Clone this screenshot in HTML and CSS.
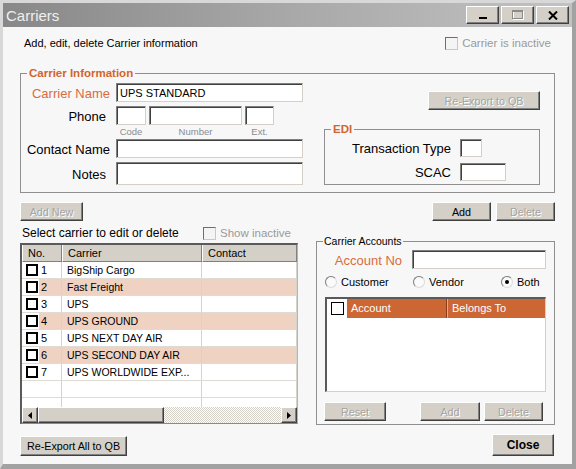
FILE: index.html
```html
<!DOCTYPE html>
<html lang="en">
<head>
  <meta charset="UTF-8" />
  <title>Carriers</title>
  <link rel="stylesheet" href="styles.css">
</head>
<body>

<div class="window">
  <div class="titlebar">
    <span class="title">Carriers</span>
    <div class="caption-btns">
      <span class="cap-btn cap-min"><svg width="8" height="2" viewBox="0 0 8 2"><rect width="8" height="2" fill="#000"/></svg></span>
      <span class="cap-btn cap-max"><svg width="12" height="10" viewBox="0 0 12 10"><rect x="1.5" y="1.5" width="10" height="8" fill="none" stroke="#fff"/><rect x="0.5" y="0.5" width="10" height="8" fill="none" stroke="#8a8a8a"/><line x1="0" y1="1.5" x2="11" y2="1.5" stroke="#8a8a8a"/></svg></span>
      <span class="cap-btn cap-close"><svg width="10" height="9" viewBox="0 0 10 9"><path d="M1 0.5 L9 8.5 M9 0.5 L1 8.5" stroke="#000" stroke-width="2"/></svg></span>
    </div>
  </div>

  <div class="content">
    <div class="intro">
      <span>Add, edit, delete Carrier information</span>
      <span class="check muted"><span class="box"></span>Carrier is inactive</span>
    </div>

    <fieldset class="group carrier-info">
      <legend>Carrier Information</legend>
      <div class="ci-body">
        <div class="ci-form">
          <div class="ci-row">
            <label class="lbl req">Carrier Name</label>
            <input class="field name" type="text" value="UPS STANDARD">
          </div>
          <div class="ci-row">
            <label class="lbl short">Phone</label>
            <div class="phone">
              <input class="field ph-code" type="text">
              <input class="field ph-num" type="text">
              <input class="field ph-ext" type="text">
            </div>
          </div>
          <div class="hints">
            <span class="ph-code">Code</span>
            <span class="ph-num">Number</span>
            <span class="ph-ext">Ext.</span>
          </div>
          <div class="ci-row contact">
            <label class="lbl">Contact Name</label>
            <input class="field name" type="text">
          </div>
          <div class="ci-row">
            <label class="lbl short">Notes</label>
            <input class="field name notes" type="text">
          </div>
        </div>

        <div class="ci-side">
          <button class="btn off reexport">Re-Export to QB</button>
          <fieldset class="group edi">
            <legend>EDI</legend>
            <div class="edi-grid">
              <label class="lbl">Transaction Type</label>
              <input class="field tx" type="text">
              <label class="lbl">SCAC</label>
              <input class="field scac" type="text">
            </div>
          </fieldset>
        </div>
      </div>
    </fieldset>

    <div class="lower">
      <div class="list-col">
        <button class="btn off add-new">Add New</button>
        <div class="select-row">
          <span>Select carrier to edit or delete</span>
          <span class="check muted"><span class="box"></span>Show inactive</span>
        </div>

        <div class="carrier-grid">
          <div class="gh">
            <span>No.</span>
            <span>Carrier</span>
            <span>Contact</span>
          </div>
          <div class="gbody">
            <div class="gr"><span class="no"><span class="cb-cell"><span class="cb"></span></span>1</span><span>BigShip Cargo</span><span></span></div>
            <div class="gr alt"><span class="no"><span class="cb-cell"><span class="cb"></span></span>2</span><span>Fast Freight</span><span></span></div>
            <div class="gr"><span class="no"><span class="cb-cell"><span class="cb"></span></span>3</span><span>UPS</span><span></span></div>
            <div class="gr alt"><span class="no"><span class="cb-cell"><span class="cb"></span></span>4</span><span>UPS GROUND</span><span></span></div>
            <div class="gr"><span class="no"><span class="cb-cell"><span class="cb"></span></span>5</span><span>UPS NEXT DAY AIR</span><span></span></div>
            <div class="gr alt"><span class="no"><span class="cb-cell"><span class="cb"></span></span>6</span><span>UPS SECOND DAY AIR</span><span></span></div>
            <div class="gr"><span class="no"><span class="cb-cell"><span class="cb"></span></span>7</span><span>UPS WORLDWIDE EXP...</span><span></span></div>
            <div class="gr"><span></span><span></span><span></span></div>
            <div class="gr"><span></span><span></span><span></span></div>
          </div>
          <div class="hscroll">
            <span class="sb-btn"><svg width="4" height="7" viewBox="0 0 4 7"><path d="M4 0 L0 3.5 L4 7Z" fill="#000"/></svg></span>
            <span class="sb-btn thumb"></span>
            <span class="track"></span>
            <span class="sb-btn"><svg width="4" height="7" viewBox="0 0 4 7"><path d="M0 0 L4 3.5 L0 7Z" fill="#000"/></svg></span>
          </div>
        </div>

        <button class="btn reexport-all">Re-Export All to QB</button>
      </div>

      <div class="acc-col">
        <div class="acc-btns">
          <button class="btn">Add</button>
          <button class="btn off">Delete</button>
        </div>

        <fieldset class="group accounts">
          <legend>Carrier Accounts</legend>
          <div class="acc-row">
            <label class="lbl req">Account No</label>
            <input class="field acc-no" type="text">
          </div>
          <div class="radios">
            <span class="radio"><span class="dot"></span>Customer</span>
            <span class="radio"><span class="dot"></span>Vendor</span>
            <span class="radio"><span class="dot on"></span>Both</span>
          </div>
          <div class="acc-grid">
            <div class="ah">
              <span class="ah-cb"><span class="cb thin"></span></span>
              <span class="ah-acc">Account</span>
              <span class="ah-bel">Belongs To</span>
            </div>
          </div>
          <div class="acc-actions">
            <button class="btn off reset">Reset</button>
            <button class="btn off acc-add">Add</button>
            <button class="btn off acc-del">Delete</button>
          </div>
        </fieldset>

        <button class="btn close">Close</button>
      </div>
    </div>
  </div>
</div>

</body>
</html>
```

FILE: styles.css
```css
body {
  margin: 0;
  font-family: "Liberation Sans", Arial, sans-serif;
  font-size: 12px;
  color: #000;
  background: #fff;
}
.window {
  width: 576px;
  height: 469px;
  box-sizing: border-box;
  border-style: solid;
  border-width: 3px 4px 5px 3px;
  border-color: #d8d8d8 #a2a2a2 #a2a2a2 #d8d8d8;
  background: #f7f7f7;
  display: flex;
  flex-direction: column;
}

/* title bar */
.titlebar {
  height: 24px;
  flex: none;
  display: flex;
  align-items: center;
  padding: 0 3px;
  background: linear-gradient(90deg, #888 0%, #a8a8a8 50%, #c2c2c2 100%);
}
.title {
  flex: 1;
  font-size: 15px;
  color: #efefef;
}
.caption-btns {
  display: flex;
  gap: 2px;
}
.cap-btn {
  width: 33px;
  height: 18px;
  box-sizing: border-box;
  background: #d4d0c8;
  border: 1px solid;
  border-color: #fff #404040 #404040 #fff;
  box-shadow: inset -1px -1px 0 #808080;
  display: flex;
  align-items: center;
  justify-content: center;
}
.cap-min { align-items: flex-end; padding-bottom: 4px; }

.content {
  flex: 1;
  padding: 6px 17px 0;
}

/* common controls */
.btn {
  font: inherit;
  font-size: 10.75px;
  padding: 0;
  height: 19px;
  box-sizing: border-box;
  background: #d4d0c8;
  color: #000;
  border: 1px solid;
  border-color: #fff #404040 #404040 #fff;
  box-shadow: inset -1px -1px 0 #808080;
}
.btn.off {
  color: #a4a4a4;
  text-shadow: 1px 1px 0 #fff;
}
.field {
  font: inherit;
  font-size: 11px;
  box-sizing: border-box;
  height: 19px;
  padding: 0 3px;
  margin: 0;
  background: #fff;
  border: 1px solid;
  border-color: #808080 #d4d0c8 #d4d0c8 #808080;
  box-shadow: inset 1px 1px 0 #404040;
  outline: none;
}
.lbl {
  font-size: 13px;
}
.lbl.req {
  color: #d86c3f;
}
.check {
  display: flex;
  align-items: center;
  gap: 4px;
  font-size: 11.5px;
}
.check.muted { color: #9a9a9a; }
.check .box {
  width: 13px;
  height: 13px;
  box-sizing: border-box;
  border: 1px solid;
  border-color: #6e6e6e #c8c8c8 #c8c8c8 #6e6e6e;
  background: #f4f4f4;
}

.group {
  margin: 0;
  padding: 0;
  min-width: 0;
  border: 1px solid #8f8f8f;
}
.group legend {
  margin-left: 6px;
  padding: 0 2px;
  font-size: 11.5px;
  font-weight: bold;
  line-height: 15px;
  color: #d2642d;
}

/* intro row */
.intro {
  height: 20px;
  display: flex;
  align-items: center;
  justify-content: space-between;
  padding: 0 4px;
  font-size: 11px;
}

/* carrier information */
.carrier-info {
  margin-top: 13px;
  padding: 0 14px 7px 0;
}
.ci-body {
  display: flex;
  padding-top: 2px;
}
.ci-row {
  display: flex;
  align-items: center;
  gap: 6px;
  margin-top: 4px;
}
.ci-row:first-child { margin-top: 0; }
.ci-row.contact { margin-top: 1px; }
.ci-row .lbl {
  width: 89px;
  text-align: right;
  padding-top: 2px;
}
.ci-row .lbl.short {
  width: 85px;
  padding-right: 4px;
}
.field.name { width: 187px; }
.field.notes { height: 23px; }
.phone {
  display: flex;
  gap: 3px;
}
.phone .field { height: 19px; }
.ph-code { width: 30px; }
.ph-num { width: 93px; }
.ph-ext { width: 29px; }
.hints {
  display: flex;
  gap: 3px;
  margin-left: 95px;
  height: 13px;
  line-height: 13px;
  font-size: 9.5px;
  color: #8c8c8c;
}
.hints span { text-align: center; }

.ci-side {
  flex: 1;
  margin-left: 21px;
  display: flex;
  flex-direction: column;
  align-items: flex-end;
}
.reexport {
  margin-top: 8px;
  width: 112px;
}
.edi {
  align-self: flex-start;
  width: 214px;
  margin-top: 12px;
  padding: 2px 0 3px;
}
.edi-grid {
  display: grid;
  grid-template-columns: 126px auto;
  column-gap: 9px;
  row-gap: 6px;
  align-items: center;
}
.edi-grid .lbl { text-align: right; }
.field.tx { width: 22px; height: 18px; }
.field.scac { width: 46px; height: 18px; }

/* lower area */
.lower {
  display: grid;
  grid-template-columns: 278px 239px;
  column-gap: 18px;
  margin-top: 9px;
}
.list-col {
  display: flex;
  flex-direction: column;
  align-items: flex-start;
}
.add-new { width: 63px; }
.select-row {
  margin-top: 4px;
  height: 16px;
  width: 100%;
  box-sizing: border-box;
  padding: 0 7px 0 2px;
  display: flex;
  align-items: center;
  justify-content: space-between;
}

.carrier-grid {
  margin-top: 2px;
  width: 278px;
  height: 181px;
  box-sizing: border-box;
  border-style: solid;
  border-width: 2px 1px 1px 2px;
  border-color: #5a5a5a #b4b4b4 #8a8a8a #5a5a5a;
  background: #fff;
  display: flex;
  flex-direction: column;
}
.gh, .gr {
  display: grid;
  grid-template-columns: 40px 140px 1fr;
}
.gh {
  height: 17px;
  flex: none;
  font-size: 11px;
}
.gh span {
  background: #d4d0c8;
  border-left: 1px solid #fff;
  border-right: 1px solid #808080;
  border-bottom: 1px solid #808080;
  padding-left: 5px;
  line-height: 16px;
}
.gbody {
  height: 145px;
  overflow: hidden;
  font-size: 10.5px;
}
.gr {
  height: 17px;
  box-sizing: border-box;
  border-bottom: 1px solid #dedbd4;
  line-height: 16px;
}
.gr.alt { background: #f0d2c2; }
.gr > span {
  border-right: 1px solid #d6d3cc;
  padding-left: 5px;
  white-space: nowrap;
  overflow: hidden;
}
.gr > span.no {
  display: flex;
  align-items: center;
  padding-left: 0;
  font-size: 11px;
}
.cb-cell {
  width: 17px;
  height: 100%;
  box-sizing: border-box;
  padding-left: 4px;
  margin-right: 2px;
  background: #fff;
  display: flex;
  align-items: center;
}
.cb {
  width: 12px;
  height: 12px;
  box-sizing: border-box;
  border: 2px solid #000;
  background: #fff;
}
.cb.thin {
  width: 13px;
  height: 13px;
  border-width: 1px;
}

.hscroll {
  height: 16px;
  flex: none;
  display: flex;
}
.sb-btn {
  width: 16px;
  height: 16px;
  box-sizing: border-box;
  background: #d4d0c8;
  border: 1px solid;
  border-color: #fff #404040 #404040 #fff;
  box-shadow: inset -1px -1px 0 #808080;
  display: flex;
  align-items: center;
  justify-content: center;
}
.sb-btn.thumb { width: 126px; }
.track {
  flex: 1;
  background: repeating-conic-gradient(#d4d0c8 0 25%, #fff 0 50%) 0 0 / 2px 2px;
}
.reexport-all {
  margin-top: 12px;
  width: 107px;
  height: 20px;
}

/* carrier accounts */
.acc-col {
  display: flex;
  flex-direction: column;
}
.acc-btns {
  display: flex;
  justify-content: flex-end;
  gap: 5px;
}
.acc-btns .btn { width: 59px; }
.accounts {
  margin-top: 13px;
  padding: 2px 8px 3px;
}
.accounts legend {
  margin-left: -2px;
  padding: 0 1px;
  font-size: 10.5px;
  font-weight: normal;
  line-height: 14px;
  color: #000;
}
.acc-row {
  display: flex;
  align-items: center;
  height: 19px;
}
.acc-row .lbl {
  flex: 1;
  text-align: right;
  padding: 2px 10px 0 0;
}
.field.acc-no { width: 134px; }
.radios {
  margin-top: 6px;
  height: 14px;
  display: flex;
  font-size: 11px;
}
.radio {
  flex: none;
  width: 88px;
  display: flex;
  align-items: center;
  gap: 4px;
}
.radio:last-child {
  flex: 1;
  width: auto;
}
.dot {
  flex: none;
  width: 12px;
  height: 12px;
  box-sizing: border-box;
  border-radius: 50%;
  border: 1px solid;
  border-color: #7a7a7a #dcdcdc #dcdcdc #7a7a7a;
  background: #fafafa;
  display: flex;
  align-items: center;
  justify-content: center;
}
.dot.on::after {
  content: "";
  width: 4px;
  height: 4px;
  border-radius: 50%;
  background: #000;
}
.acc-grid {
  margin-top: 8px;
  height: 95px;
  box-sizing: border-box;
  border-style: solid;
  border-width: 2px 1px 1px 2px;
  border-color: #5a5a5a #d4d0c8 #d4d0c8 #5a5a5a;
  background: #fff;
}
.ah {
  display: flex;
  height: 19px;
  line-height: 19px;
  font-size: 11px;
}
.ah-cb {
  width: 20px;
  display: flex;
  align-items: center;
  justify-content: center;
  background: #fff;
}
.ah-acc, .ah-bel {
  background: #cc6633;
  color: #fff;
  padding-left: 4px;
  box-sizing: border-box;
}
.ah-acc {
  width: 100px;
  border-right: 1px solid #8a3f18;
}
.ah-bel {
  flex: 1;
  border-left: 1px solid #e9a784;
}
.acc-actions {
  margin-top: 10px;
  display: flex;
  gap: 4px;
}
.reset { width: 62px; margin-left: -1px; }
.acc-add { width: 60px; margin-left: auto; }
.acc-del { width: 59px; margin-right: 3px; }

.close {
  align-self: flex-end;
  margin: 9px 1px 0 0;
  width: 62px;
  height: 22px;
  font-size: 12px;
  font-weight: bold;
}
```
